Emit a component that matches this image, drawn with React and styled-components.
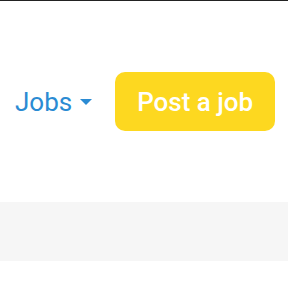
import React from "react";
import styled, { createGlobalStyle } from "styled-components";

const Global = createGlobalStyle`
  html, body { margin: 0; padding: 0; background: #fff; }
  body { font-family: Roboto, "Noto Sans", Arial, sans-serif; }
`;

const Page = styled.div`
  width: 288px;
  height: 288px;
  overflow: hidden;
  border-top: 1px solid #222;
  box-sizing: border-box;
  display: flex;
  flex-direction: column;
`;

const Nav = styled.nav`
  display: flex;
  align-items: center;
  gap: 23px;
  padding: 71px 0 0 15px;
  height: 59px;
`;

const JobsLink = styled.a`
  display: flex;
  align-items: center;
  gap: 8px;
  color: #2b8bd3;
  font-size: 26px;
  text-decoration: none;
  cursor: pointer;
`;

const Caret = styled.span`
  width: 0;
  height: 0;
  margin-top: 1px;
  border-left: 6px solid transparent;
  border-right: 6px solid transparent;
  border-top: 6px solid #2b8bd3;
`;

const PostButton = styled.button`
  width: 160px;
  height: 59px;
  border: none;
  border-radius: 10px;
  background: #fdd820;
  color: #fff;
  font-family: Roboto, "Noto Sans", Arial, sans-serif;
  font-size: 26px;
  font-weight: 500;
  padding: 0;
  cursor: pointer;
`;

const Band = styled.div`
  margin-top: 71px;
  height: 59px;
  background: #f6f6f6;
`;

export default function App() {
  return (
    <>
      <Global />
      <Page>
        <Nav>
          <JobsLink>
            Jobs
            <Caret />
          </JobsLink>
          <PostButton>Post a job</PostButton>
        </Nav>
        <Band />
      </Page>
    </>
  );
}
